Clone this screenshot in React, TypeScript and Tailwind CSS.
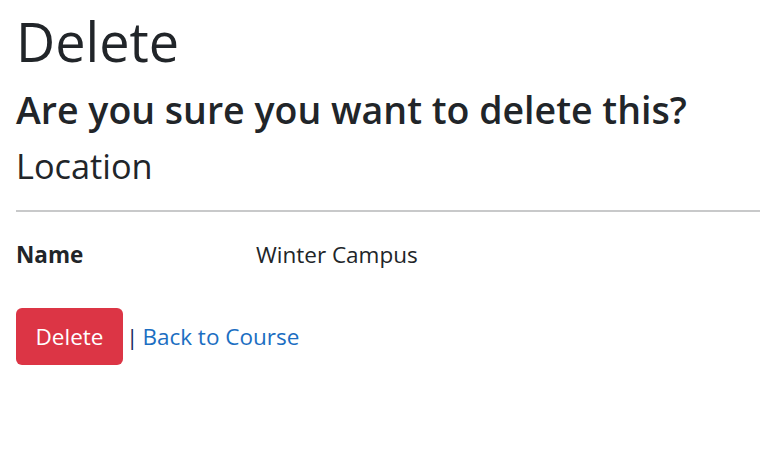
export default function App() {
    return (
        <div className="min-h-[455px] bg-white pl-4 text-[#212529] [font-family:'Open_Sans',sans-serif]">
            <h1 className="pt-[9px] text-[54px] font-normal leading-[1.2]">Delete</h1>
            <h2 className="mt-[13px] text-[37.5px] font-semibold leading-[1.2]">Are you sure you want to delete this?</h2>
            <div>
                <h4 className="mt-[13px] text-[34.3px] font-medium leading-[1.2]">Location</h4>
                <hr className="mt-[24px] border-t-2 border-[#c8c9ca]" />
                <dl className="mt-[26px] grid grid-cols-[240px_1fr] text-[22.5px] leading-[1.5]">
                    <dt className="font-bold">Name</dt>
                    <dd>Winter Campus</dd>
                </dl>
                <form className="mt-[36.5px] flex items-center text-[22.5px]">
                    <button
                        type="button"
                        className="h-[57px] w-[107px] rounded-[6px] bg-[#dc3545] text-white"
                    >
                        Delete
                    </button>
                    <span className="ml-[3px] text-[#1e2a5e]">|</span>
                    <a href="#" className="ml-[4px] text-[#1b6ec2]">
                        Back to Course
                    </a>
                </form>
            </div>
        </div>
    )
}
